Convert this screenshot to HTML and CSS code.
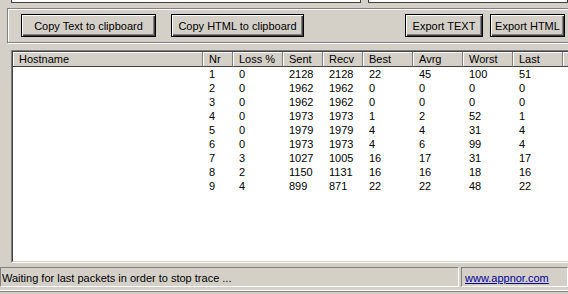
FILE: index.html
```html
<!DOCTYPE html>
<html>
	<head>
		<meta charset="UTF-8">
		<title>Trace</title>
		<link rel="stylesheet" href="styles.css">
	</head>
	<body>
		<div class="top">
			<div class="top-pane top-left"></div>
			<div class="top-pane top-right"></div>
		</div>

		<div class="group">
			<button class="btn btn-copy-text">Copy Text to clipboard</button>
			<button class="btn btn-copy-html">Copy HTML to clipboard</button>
			<button class="btn btn-export-text">Export TEXT</button>
			<button class="btn btn-export-html">Export HTML</button>
		</div>

		<div class="list">
			<div class="list-inner">
				<table class="grid">
					<colgroup>
						<col class="c-host">
						<col class="c-nr">
						<col class="c-loss">
						<col class="c-sent">
						<col class="c-recv">
						<col class="c-best">
						<col class="c-avrg">
						<col class="c-worst">
						<col class="c-last">
						<col class="c-fill">
					</colgroup>
					<thead>
						<tr>
							<th>Hostname</th>
							<th>Nr</th>
							<th>Loss %</th>
							<th>Sent</th>
							<th>Recv</th>
							<th>Best</th>
							<th>Avrg</th>
							<th>Worst</th>
							<th>Last</th>
							<th></th>
						</tr>
					</thead>
					<tbody>
						<tr><td></td><td>1</td><td>0</td><td>2128</td><td>2128</td><td>22</td><td>45</td><td>100</td><td>51</td><td></td></tr>
						<tr><td></td><td>2</td><td>0</td><td>1962</td><td>1962</td><td>0</td><td>0</td><td>0</td><td>0</td><td></td></tr>
						<tr><td></td><td>3</td><td>0</td><td>1962</td><td>1962</td><td>0</td><td>0</td><td>0</td><td>0</td><td></td></tr>
						<tr><td></td><td>4</td><td>0</td><td>1973</td><td>1973</td><td>1</td><td>2</td><td>52</td><td>1</td><td></td></tr>
						<tr><td></td><td>5</td><td>0</td><td>1979</td><td>1979</td><td>4</td><td>4</td><td>31</td><td>4</td><td></td></tr>
						<tr><td></td><td>6</td><td>0</td><td>1973</td><td>1973</td><td>4</td><td>6</td><td>99</td><td>4</td><td></td></tr>
						<tr><td></td><td>7</td><td>3</td><td>1027</td><td>1005</td><td>16</td><td>17</td><td>31</td><td>17</td><td></td></tr>
						<tr><td></td><td>8</td><td>2</td><td>1150</td><td>1131</td><td>16</td><td>16</td><td>18</td><td>16</td><td></td></tr>
						<tr><td></td><td>9</td><td>4</td><td>899</td><td>871</td><td>22</td><td>22</td><td>48</td><td>22</td><td></td></tr>
					</tbody>
				</table>
			</div>
		</div>

		<div class="status">
			<div class="status-pane status-msg">Waiting for last packets in order to stop trace ...</div>
			<div class="status-pane status-link"><a href="#">www.appnor.com</a></div>
		</div>
		<div class="bottom-edge"></div>
	</body>
</html>
```

FILE: styles.css
```css
body{
margin: 0;
width: 568px;
height: 294px;
overflow: hidden;
background: #d4d0c8;
color: #000;
font: 11px "Liberation Sans", Arial, sans-serif;
}

/* bottoms of the panes above */
.top{
display: flex;
height: 3px;
}
.top-pane{
box-sizing: border-box;
height: 3px;
background: #fff;
border: 1px solid #404040;
border-top: 0;
}
.top-left{
margin-left: 11px;
width: 377px;
}
.top-right{
margin-left: 7px;
width: 200px;
flex: none;
}

/* button group */
.group{
box-sizing: border-box;
display: flex;
align-items: flex-start;
margin: 5px 0 0 7px;
width: 570px;
height: 35px;
padding: 5px 11px 0 13px;
border: 1px solid #808080;
box-shadow: inset 1px 1px #fff, 1px 1px #fff;
}
.btn{
box-sizing: border-box;
height: 23px;
padding: 0;
margin: 0;
background: #d4d0c8;
color: #000;
font: inherit;
border: 1px solid #000;
box-shadow: inset 1px 1px #fff, inset -1px -1px #404040, inset -2px -2px #808080;
}
.btn-copy-text{
width: 135px;
}
.btn-copy-html{
width: 133px;
margin-left: 15px;
}
.btn-export-text{
width: 78px;
margin-left: auto;
}
.btn-export-html{
width: 75px;
margin-left: 7px;
}

/* list view */
.list{
box-sizing: border-box;
margin: 7px 0 0 11px;
width: 570px;
height: 213px;
border: 1px solid;
border-color: #808080 #fff #fff #808080;
}
.list-inner{
box-sizing: border-box;
height: 100%;
background: #fff;
border: 1px solid;
border-color: #404040 #d4d0c8 #d4d0c8 #404040;
overflow: hidden;
}
.grid{
border-collapse: separate;
border-spacing: 0;
table-layout: fixed;
width: 600px;
}
.c-host{ width: 190px; }
.c-nr{ width: 30px; }
.c-loss{ width: 50px; }
.c-sent{ width: 40px; }
.c-recv{ width: 40px; }
.c-best{ width: 50px; }
.c-avrg{ width: 50px; }
.c-worst{ width: 50px; }
.c-last{ width: 50px; }
.c-fill{ width: 50px; }
.grid th{
box-sizing: border-box;
height: 15px;
padding: 0 0 0 6px;
background: #d4d0c8;
font-weight: normal;
text-align: left;
line-height: 13px;
white-space: nowrap;
border-right: 1px solid #808080;
border-bottom: 1px solid #404040;
box-shadow: inset 1px 1px #fff;
}
.grid td{
height: 14px;
padding: 1px 0 0 6px;
line-height: 13px;
white-space: nowrap;
box-sizing: border-box;
}

/* status bar */
.status{
display: flex;
margin-top: 4px;
height: 20px;
}
.status-pane{
box-sizing: border-box;
height: 20px;
padding: 2px 0 0 1px;
line-height: 16px;
border: 1px solid;
border-color: #808080 #fff #fff #808080;
white-space: nowrap;
}
.status-msg{
width: 459px;
}
.status-link{
margin-left: 2px;
width: 107px;
padding-left: 3px;
}
.status-link a{
color: #000099;
}
.bottom-edge{
margin-top: 3px;
border-top: 1px solid #fff;
border-bottom: 1px solid #808080;
}
```
